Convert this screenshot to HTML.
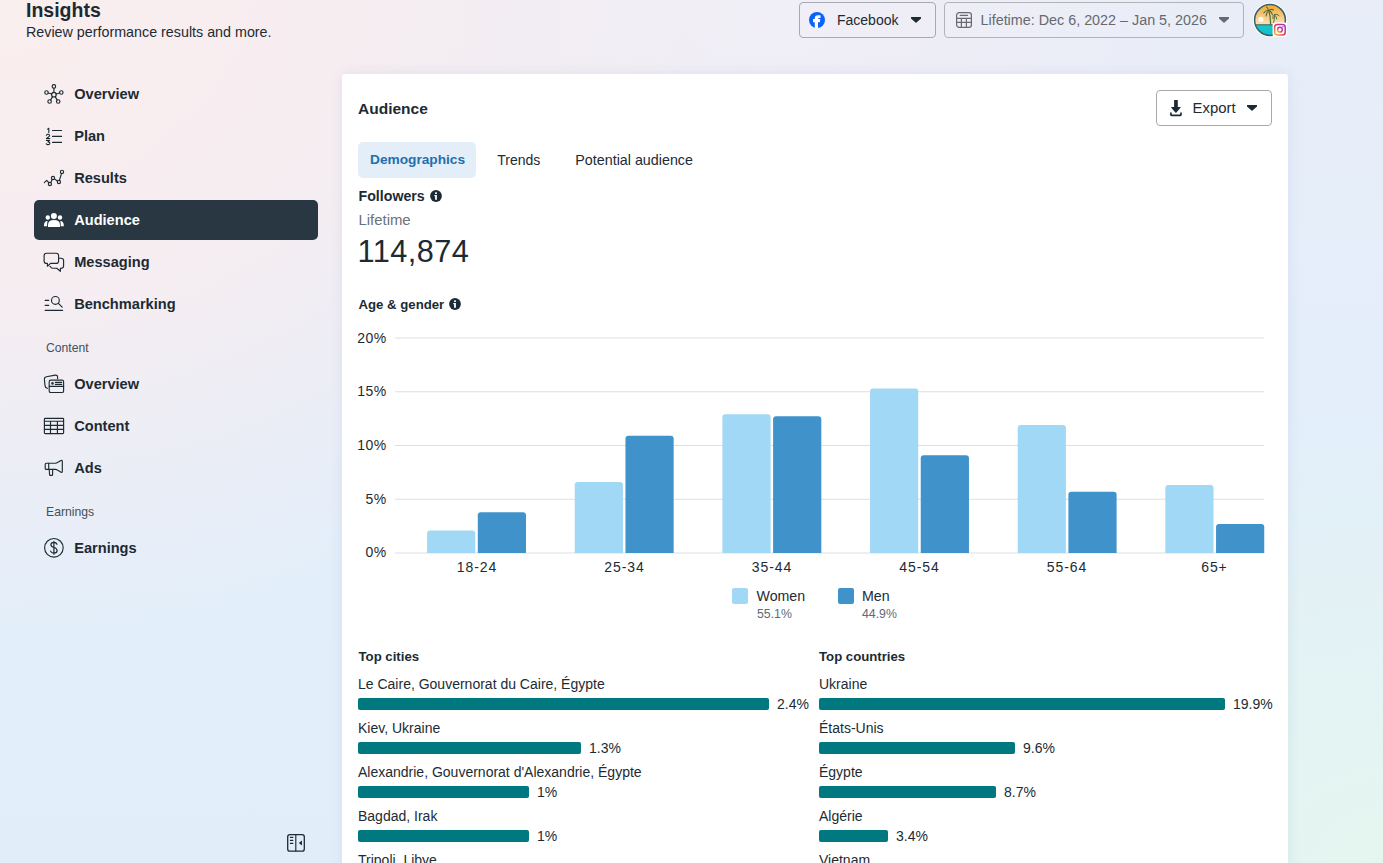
<!DOCTYPE html>
<html><head><meta charset="utf-8">
<style>
*{margin:0;padding:0;box-sizing:border-box}
html,body{width:1383px;height:863px;overflow:hidden}
body{position:relative;font-family:"Liberation Sans",sans-serif;color:#1c2b33;
background:
 radial-gradient(ellipse 760px 640px at 0px 0px, rgba(250,238,238,1) 0%, rgba(248,237,240,0.9) 45%, rgba(243,237,245,0) 100%),
 radial-gradient(ellipse 560px 460px at 1383px 863px, rgba(229,246,240,1) 0%, rgba(229,246,240,0.65) 40%, rgba(229,246,240,0) 100%),
 radial-gradient(ellipse 560px 300px at 760px 20px, rgba(241,238,246,1) 0%, rgba(241,238,246,0) 100%),
 linear-gradient(180deg,#e8edf8 0%,#e3eefa 45%,#e1eefa 100%);
}
.a{position:absolute;line-height:1;white-space:nowrap}
.b{font-weight:bold}
svg{position:absolute;overflow:visible}
.nav{font-size:14.6px;font-weight:bold;color:#1c2b33}
.sec{font-size:12px;color:#44505a}
.card{position:absolute;left:342px;top:74px;width:946px;height:820px;background:#fff;border-radius:3px;box-shadow:0 0 14px rgba(60,80,160,0.09)}
.btn{position:absolute;border:1px solid #a6aaae;border-radius:4px}
.grid{position:absolute;left:395px;width:869px;height:1px;background:#e3e5e9}
.yl{font-size:14px;color:#1c2b33;text-align:right;width:40px;letter-spacing:0.4px}
.xl{font-size:14px;color:#1c2b33;text-align:center;width:60px;letter-spacing:0.9px;text-indent:0.9px}
.w{position:absolute;background:#a1d8f6;border-radius:3px 3px 0 0;width:48px}
.m{position:absolute;background:#3f92ca;border-radius:3px 3px 0 0;width:48px}
.lbl{font-size:14px;color:#1c2b33}
.bar{position:absolute;height:12px;background:#00787f;border-radius:2px}
.pct{font-size:14px;color:#1c2b33}
</style></head><body>
<!-- header -->
<div class="a b" style="left:26px;top:0.8px;font-size:19.5px;">Insights</div>
<div class="a" style="left:26px;top:25px;font-size:14.3px;color:#1c2b33">Review performance results and more.</div>

<!-- SIDEBAR -->
<div style="position:absolute;left:34px;top:200px;width:284px;height:40px;background:#283742;border-radius:5px"></div>
<div class="a nav" style="left:74.2px;top:86.56px;color:#1c2b33">Overview</div>
<div class="a nav" style="left:74.2px;top:128.56px;color:#1c2b33">Plan</div>
<div class="a nav" style="left:74.2px;top:170.56px;color:#1c2b33">Results</div>
<div class="a nav" style="left:74.2px;top:212.56px;color:#ffffff">Audience</div>
<div class="a nav" style="left:74.2px;top:254.56px;color:#1c2b33">Messaging</div>
<div class="a nav" style="left:74.2px;top:296.56px;color:#1c2b33">Benchmarking</div>
<div class="a nav" style="left:74.2px;top:376.56px;color:#1c2b33">Overview</div>
<div class="a nav" style="left:74.2px;top:418.56px;color:#1c2b33">Content</div>
<div class="a nav" style="left:74.2px;top:460.56px;color:#1c2b33">Ads</div>
<div class="a nav" style="left:74.2px;top:540.56px;color:#1c2b33">Earnings</div>
<div class="a sec" style="left:46px;top:341.67px;font-size:12.2px">Content</div>
<div class="a sec" style="left:46px;top:505.67px;font-size:12.2px">Earnings</div>

<svg style="left:0;top:0" width="1383" height="863" viewBox="0 0 1383 863">
<g fill="none" stroke="#1c2b33" stroke-width="1.15" stroke-linecap="round" stroke-linejoin="round">
<!-- overview -->
<circle cx="53.9" cy="94.7" r="2.3"/>
<circle cx="53.9" cy="86.4" r="1.75"/>
<circle cx="46.5" cy="92.5" r="1.75"/>
<circle cx="61.3" cy="92.5" r="1.75"/>
<circle cx="49.6" cy="101.5" r="1.75"/>
<circle cx="58.2" cy="101.5" r="1.75"/>
<path d="M53.9 92.4V88.2M51.7 94L48.2 93M56.1 94L59.6 93M52.6 96.6L50.7 99.9M55.2 96.6L57.1 99.9"/>
<!-- plan -->
<path d="M52.5 130.5H61.6M52.5 136.4H61.6M52.5 142.4H61.6"/>
<path stroke-width="1.1" d="M47.6 129.1L48.8 128.3V132.6M46.4 135.3Q46.7 134.3 48 134.3Q49.6 134.3 49.6 135.5Q49.6 136.5 46.4 138.5H49.8M46.4 140.4H49.6L47.9 141.9Q49.9 142 49.9 143.2Q49.8 144.6 48 144.6Q46.7 144.6 46.3 143.7"/>
<!-- results -->
<path d="M44.3 182.6L46.7 180.3L48.8 182.7M50.7 182.4L52.2 179.6M54.5 178.9L57.4 181M59.4 180.3L61.5 173.6"/>
<circle cx="49.9" cy="184" r="1.6"/>
<circle cx="53" cy="178" r="1.6"/>
<circle cx="58.9" cy="182" r="1.6"/>
<circle cx="62" cy="171.9" r="1.6"/>
<!-- messaging -->
<path d="M47.4 263.4H46.6Q44.1 263.4 44.1 260.9V255.7Q44.1 253.2 46.6 253.2H56.1Q58.6 253.2 58.6 255.7V260.9Q58.6 263.4 56.1 263.4H50.6L47.4 266.2Z"/>
<path d="M58.6 258.2H61.1Q63.6 258.2 63.6 260.7V265.7Q63.6 268.2 61.1 268.2H60.4V271.3L56.7 268.2H52.6Q51.2 268.2 50 266.3"/>
<!-- benchmarking -->
<path d="M45.2 300.4H48.7M45.2 305.4H48.7M45.2 310.4H62.6M58.4 303.4L62.2 307.2"/>
<circle cx="55.4" cy="300.4" r="3.9"/>
<!-- content overview -->
<path d="M47.4 388.3Q45.2 388 45 385.6L44.4 379.4Q44.3 377.2 46.4 376.8L55.3 375.1Q57.5 374.9 57.6 377.1L57.6 378.7"/>
<rect x="49.2" y="380.1" width="14.4" height="12.4" rx="1.6"/>
<path d="M49.2 386.3H63.6M55.4 382.4H61.7M55.4 384.4H61.7"/>
<circle cx="52.5" cy="383.4" r="0.6" stroke-width="1.4"/>
<!-- content table -->
<rect x="44.4" y="418.3" width="19.2" height="15.3" rx="0.8"/>
<path d="M44.4 421.2H63.6M44.4 425.3H63.6M44.4 429.4H63.6M50.5 421.2V433.6M57.4 421.2V433.6"/>
<!-- ads -->
<path d="M48.7 463.2H46.2Q45.2 463.2 45.2 464.2V468.4Q45.2 469.4 46.2 469.4H48.7Z"/>
<path d="M48.7 463.2H55.6Q56.5 463.2 57.4 462.5L61 460.5Q62.3 459.9 62.3 461.3V471.4Q62.3 472.8 61 472.2L57.4 470.1Q56.5 469.4 55.6 469.4H48.7"/>
<path d="M49.2 469.5L49.6 474.8Q49.7 475.4 50.3 475.4H51.9Q52.6 475.4 52.6 474.8V469.5"/>
<!-- earnings -->
<circle cx="53.9" cy="547.8" r="9.3"/>
<path stroke-width="1.2" d="M57 544.3Q56.2 542.3 53.9 542.3Q50.9 542.3 50.9 544.6Q50.9 546.7 54 547.5Q57.1 548.3 57.1 550.6Q57.1 553.2 53.9 553.2Q51.4 553.2 50.6 551.1M53.9 541.4V554.2"/>
<!-- collapse -->
<rect x="287.7" y="834.6" width="16.6" height="16.6" rx="2.2" stroke-width="1.3"/>
<path d="M295.8 834.6V851.2M290.4 837.4H292.8M290.4 840.4H292.8M290.4 843.4H292.8"/>
</g>
<path d="M302 840.6V845.4L298.8 843Z" fill="#1c2b33"/>
<!-- audience (white) -->
<g fill="#fff">
<circle cx="53.9" cy="215.9" r="3.0"/>
<circle cx="47.8" cy="217.5" r="2.2"/>
<circle cx="60" cy="217.5" r="2.2"/>
<path d="M48 227V225Q48 220.1 54 220.1Q60 220.1 60 225V227Z"/>
<path d="M44 226.3V225.3Q44 221.3 47.6 221.1Q47.1 222.6 47.1 225V226.3Z"/>
<path d="M63.8 226.3V225.3Q63.8 221.3 60.2 221.1Q60.7 222.6 60.7 225V226.3Z"/>
</g>
</svg>
<!-- TOP BUTTONS -->
<div class="btn" style="left:799px;top:2px;width:137px;height:36px"></div>
<svg style="left:809px;top:12px" width="16" height="16" viewBox="0 0 16 16"><circle cx="8" cy="8" r="8" fill="#0a62f8"/><path d="M5.8 16V10.2H4.1V7.1H5.8V6.3Q5.8 3.3 9 3.3H11.5V5.9H10.2Q9 5.9 9 7V7.1H11.3L10.9 10.2H9V16Z" fill="#fff"/></svg>
<div class="a" style="left:837px;top:13.05px;font-size:14px;color:#1c2b33">Facebook</div>
<svg style="left:910px;top:16px" width="12" height="8" viewBox="0 0 12 8"><path d="M1.3 1H10.7Q11 1 11 1.3V2.5L6.5 6.6Q6 7 5.5 6.6L1 2.5V1.3Q1 1 1.3 1Z" fill="#1c2b33"/></svg>
<div class="btn" style="left:944px;top:2px;width:300px;height:36px;border-color:#b0b4b9"></div>
<svg style="left:956px;top:12px" width="16" height="16" viewBox="0 0 16 16"><g fill="none" stroke="#676a70" stroke-width="1.2" stroke-linecap="round"><rect x="0.6" y="0.6" width="14.8" height="14.8" rx="2.6"/><path d="M0.6 6.3H15.4M0.6 10.4H15.4M5.4 6.3V15.4M10.4 6.3V15.4"/><path d="M4.3 3.4H11.5" stroke-width="1.3"/></g></svg>
<div class="a" style="left:980.5px;top:12.75px;font-size:14.35px;color:#66696f">Lifetime: Dec 6, 2022 – Jan 5, 2026</div>
<svg style="left:1218px;top:16px" width="12" height="8" viewBox="0 0 12 8"><path d="M1.3 1H10.7Q11 1 11 1.3V2.5L6.5 6.6Q6 7 5.5 6.6L1 2.5V1.3Q1 1 1.3 1Z" fill="#66696f"/></svg>
<svg style="left:1252px;top:2px" width="38" height="38" viewBox="0 0 38 38">
<defs><clipPath id="av"><circle cx="18" cy="18" r="15.2"/></clipPath><linearGradient id="sky" x1="0" y1="0" x2="0" y2="1"><stop offset="0" stop-color="#f0a010"/><stop offset="0.55" stop-color="#f5c578"/><stop offset="1" stop-color="#fbe2b8"/></linearGradient><linearGradient id="sea" x1="0" y1="0" x2="0" y2="1"><stop offset="0" stop-color="#1bc8c0"/><stop offset="1" stop-color="#10b8dc"/></linearGradient><linearGradient id="ig" x1="0" y1="1" x2="1" y2="0"><stop offset="0" stop-color="#fcc43a"/><stop offset="0.45" stop-color="#e8305c"/><stop offset="1" stop-color="#9b36c8"/></linearGradient></defs>
<circle cx="18" cy="18" r="17.2" fill="#fff"/>
<g clip-path="url(#av)"><rect x="0" y="0" width="36" height="22.6" fill="url(#sky)"/><rect x="0" y="22.6" width="36" height="14" fill="url(#sea)"/><path d="M2 22.8H34" stroke="#2d5a5a" stroke-width="0.9"/><circle cx="8.9" cy="17.4" r="2.6" fill="#fffaf0" opacity="0.95"/>
<g stroke="#4f6e3f" fill="none" stroke-linecap="round"><path d="M18.6 23Q18.8 15 16.8 8.6" stroke-width="1.2"/><path d="M16.8 8.6Q13.5 8 11.8 11M16.8 8.6Q15.5 5.5 14.5 5M16.8 8.6Q19.5 6.5 21.5 8M16.8 8.6Q14 11 14.2 14M16.8 8.6Q20 10 20.5 13" stroke-width="1.1"/><path d="M21.5 22Q22.5 17 22.5 12.8" stroke-width="1"/><path d="M22.5 12.8Q25 11 27 13.5M22.5 12.8Q24.5 14.5 24.8 17M22.5 12.8Q20.5 14 20.8 16.5" stroke-width="1"/></g></g>
<circle cx="18" cy="18" r="15.4" fill="none" stroke="#3a6068" stroke-width="1.5"/>
<rect x="20.6" y="20.4" width="14.6" height="14.6" rx="2.5" fill="#fff"/>
<rect x="22.6" y="22.4" width="10.6" height="10.6" rx="2.8" fill="none" stroke="url(#ig)" stroke-width="1.5"/>
<circle cx="27.9" cy="27.7" r="2.4" fill="none" stroke="url(#ig)" stroke-width="1.4"/>
<circle cx="30.9" cy="24.7" r="0.65" fill="#9b36c8"/>
</svg>

<!-- CARD -->
<div class="card"></div>
<div class="a" style="left:358px;top:100.98px;font-size:15.5px;font-weight:bold">Audience</div>
<div class="btn" style="left:1156px;top:90px;width:116px;height:36px"></div>
<svg style="left:1169px;top:99px" width="14" height="18" viewBox="0 0 14 18"><path d="M5.1 1.3Q5.1 1 5.4 1H8.4Q8.8 1 8.8 1.3V8.1H11.2Q12 8.1 11.5 8.7L7.4 13.4Q6.9 13.9 6.4 13.4L2.3 8.7Q1.8 8.1 2.6 8.1H5.1Z" fill="#1c2b33"/><path d="M1.9 14.2V15.4Q1.9 16.4 2.9 16.4H11Q12 16.4 12 15.4V14.2" fill="none" stroke="#1c2b33" stroke-width="1.7" stroke-linecap="round"/></svg>
<div class="a" style="left:1192.5px;top:100.59px;font-size:14.9px;">Export</div>
<svg style="left:1246px;top:104px" width="12" height="8" viewBox="0 0 12 8"><path d="M1.3 1H10.7Q11 1 11 1.3V2.5L6.5 6.6Q6 7 5.5 6.6L1 2.5V1.3Q1 1 1.3 1Z" fill="#1c2b33"/></svg>
<div style="position:absolute;left:358px;top:142px;width:118px;height:36px;background:#e3eef8;border-radius:5px"></div>
<div class="a" style="left:370px;top:153.1px;font-size:13.7px;font-weight:bold;color:#1f6fad">Demographics</div>
<div class="a" style="left:497.3px;top:152.85px;font-size:14px;">Trends</div>
<div class="a" style="left:575.3px;top:152.60px;font-size:14.3px;">Potential audience</div>
<div class="a" style="left:358.5px;top:188.78px;font-size:14.2px;font-weight:bold">Followers</div>
<svg style="left:429.9px;top:189.9px" width="12" height="12" viewBox="0 0 12 12"><circle cx="6" cy="6" r="5.9" fill="#1c2b33"/><rect x="5.05" y="2.3" width="1.9" height="1.7" rx="0.5" fill="#fff"/><path d="M4.3 5H6.9V9.7H5.1V6.3H4.3Z" fill="#fff"/></svg>
<div class="a" style="left:358.5px;top:213px;font-size:14.9px;color:#6b737b">Lifetime</div>
<div class="a" style="left:357.5px;top:236.9px;font-size:30.7px;letter-spacing:0.45px;color:#1c2b33">114,874</div>
<div class="a" style="left:358.5px;top:297.83px;font-size:13.2px;font-weight:bold">Age &amp; gender</div>
<svg style="left:449px;top:298px" width="12" height="12" viewBox="0 0 12 12"><circle cx="6" cy="6" r="5.9" fill="#1c2b33"/><rect x="5.05" y="2.3" width="1.9" height="1.7" rx="0.5" fill="#fff"/><path d="M4.3 5H6.9V9.7H5.1V6.3H4.3Z" fill="#fff"/></svg>
<svg id="chart" style="left:0;top:0" width="1383" height="863" viewBox="0 0 1383 863">
<g stroke="#dddfe3" stroke-width="1">
<line x1="395" y1="338" x2="1264" y2="338"/>
<line x1="395" y1="391.75" x2="1264" y2="391.75"/>
<line x1="395" y1="445.5" x2="1264" y2="445.5"/>
<line x1="395" y1="499.25" x2="1264" y2="499.25"/>
<line x1="395" y1="553" x2="1264" y2="553"/>
</g>
<path fill="#a1d8f6" d="M427.10 553V533.40Q427.10 530.40 430.10 530.40H472.30Q475.30 530.40 475.30 533.40V553Z"/>
<path fill="#3f92ca" d="M477.80 553V515.20Q477.80 512.20 480.80 512.20H523.00Q526.00 512.20 526.00 515.20V553Z"/>
<path fill="#a1d8f6" d="M574.75 553V485.00Q574.75 482.00 577.75 482.00H619.95Q622.95 482.00 622.95 485.00V553Z"/>
<path fill="#3f92ca" d="M625.45 553V438.80Q625.45 435.80 628.45 435.80H670.65Q673.65 435.80 673.65 438.80V553Z"/>
<path fill="#a1d8f6" d="M722.40 553V417.20Q722.40 414.20 725.40 414.20H767.60Q770.60 414.20 770.60 417.20V553Z"/>
<path fill="#3f92ca" d="M773.10 553V419.20Q773.10 416.20 776.10 416.20H818.30Q821.30 416.20 821.30 419.20V553Z"/>
<path fill="#a1d8f6" d="M870.05 553V391.60Q870.05 388.60 873.05 388.60H915.25Q918.25 388.60 918.25 391.60V553Z"/>
<path fill="#3f92ca" d="M920.75 553V458.20Q920.75 455.20 923.75 455.20H965.95Q968.95 455.20 968.95 458.20V553Z"/>
<path fill="#a1d8f6" d="M1017.70 553V428.00Q1017.70 425.00 1020.70 425.00H1062.90Q1065.90 425.00 1065.90 428.00V553Z"/>
<path fill="#3f92ca" d="M1068.40 553V494.80Q1068.40 491.80 1071.40 491.80H1113.60Q1116.60 491.80 1116.60 494.80V553Z"/>
<path fill="#a1d8f6" d="M1165.35 553V488.00Q1165.35 485.00 1168.35 485.00H1210.55Q1213.55 485.00 1213.55 488.00V553Z"/>
<path fill="#3f92ca" d="M1216.05 553V527.00Q1216.05 524.00 1219.05 524.00H1261.25Q1264.25 524.00 1264.25 527.00V553Z"/>
</svg>
<div class="a yl" style="left:346.5px;top:331.45px">20%</div>
<div class="a yl" style="left:346.5px;top:384.45px">15%</div>
<div class="a yl" style="left:346.5px;top:438.45px">10%</div>
<div class="a yl" style="left:346.5px;top:492.45px">5%</div>
<div class="a yl" style="left:346.5px;top:545.45px">0%</div>
<div class="a xl" style="left:446.5px;top:560.05px">18-24</div>
<div class="a xl" style="left:594.0px;top:560.05px">25-34</div>
<div class="a xl" style="left:741.5px;top:560.05px">35-44</div>
<div class="a xl" style="left:889.0px;top:560.05px">45-54</div>
<div class="a xl" style="left:1036.5px;top:560.05px">55-64</div>
<div class="a xl" style="left:1184.0px;top:560.05px">65+</div>
<div style="position:absolute;left:732px;top:588px;width:16px;height:16px;background:#a1d8f6;border-radius:2px"></div>
<div class="a" style="left:756.5px;top:588.98px;font-size:14.2px;">Women</div>
<div class="a" style="left:757px;top:607.59px;font-size:12.3px;color:#5f6b75">55.1%</div>
<div style="position:absolute;left:838px;top:588px;width:16px;height:16px;background:#3f92ca;border-radius:2px"></div>
<div class="a" style="left:862px;top:588.98px;font-size:14.2px;">Men</div>
<div class="a" style="left:862px;top:607.59px;font-size:12.3px;color:#5f6b75">44.9%</div>
<div class="a" style="left:358.5px;top:649.73px;font-size:13.2px;font-weight:bold">Top cities</div>
<div class="a" style="left:819px;top:649.73px;font-size:13.2px;font-weight:bold">Top countries</div>
<div class="a" style="left:358px;top:676.65px;font-size:14px;">Le Caire, Gouvernorat du Caire, Égypte</div>
<div class="bar" style="left:358px;top:698px;width:411px"></div>
<div class="a" style="left:777.0px;top:697.15px;font-size:14px;">2.4%</div>
<div class="a" style="left:358px;top:720.65px;font-size:14px;">Kiev, Ukraine</div>
<div class="bar" style="left:358px;top:742px;width:223px"></div>
<div class="a" style="left:589.0px;top:741.15px;font-size:14px;">1.3%</div>
<div class="a" style="left:358px;top:764.65px;font-size:14px;">Alexandrie, Gouvernorat d'Alexandrie, Égypte</div>
<div class="bar" style="left:358px;top:786px;width:171px"></div>
<div class="a" style="left:537.0px;top:785.15px;font-size:14px;">1%</div>
<div class="a" style="left:358px;top:808.65px;font-size:14px;">Bagdad, Irak</div>
<div class="bar" style="left:358px;top:830px;width:171px"></div>
<div class="a" style="left:537.0px;top:829.15px;font-size:14px;">1%</div>
<div class="a" style="left:358px;top:852.65px;font-size:14px;">Tripoli, Libye</div>
<div class="bar" style="left:358px;top:874px;width:142px"></div>
<div class="a" style="left:508.0px;top:873.15px;font-size:14px;">1%</div>
<div class="a" style="left:819px;top:676.65px;font-size:14px;">Ukraine</div>
<div class="bar" style="left:819px;top:698px;width:406px"></div>
<div class="a" style="left:1233.0px;top:697.15px;font-size:14px;">19.9%</div>
<div class="a" style="left:819px;top:720.65px;font-size:14px;">États-Unis</div>
<div class="bar" style="left:819px;top:742px;width:196px"></div>
<div class="a" style="left:1023.0px;top:741.15px;font-size:14px;">9.6%</div>
<div class="a" style="left:819px;top:764.65px;font-size:14px;">Égypte</div>
<div class="bar" style="left:819px;top:786px;width:177px"></div>
<div class="a" style="left:1004.0px;top:785.15px;font-size:14px;">8.7%</div>
<div class="a" style="left:819px;top:808.65px;font-size:14px;">Algérie</div>
<div class="bar" style="left:819px;top:830px;width:69px"></div>
<div class="a" style="left:896.0px;top:829.15px;font-size:14px;">3.4%</div>
<div class="a" style="left:819px;top:852.65px;font-size:14px;">Vietnam</div>
<div class="bar" style="left:819px;top:874px;width:61px"></div>
<div class="a" style="left:888.0px;top:873.15px;font-size:14px;">3.2%</div>
</body></html>
